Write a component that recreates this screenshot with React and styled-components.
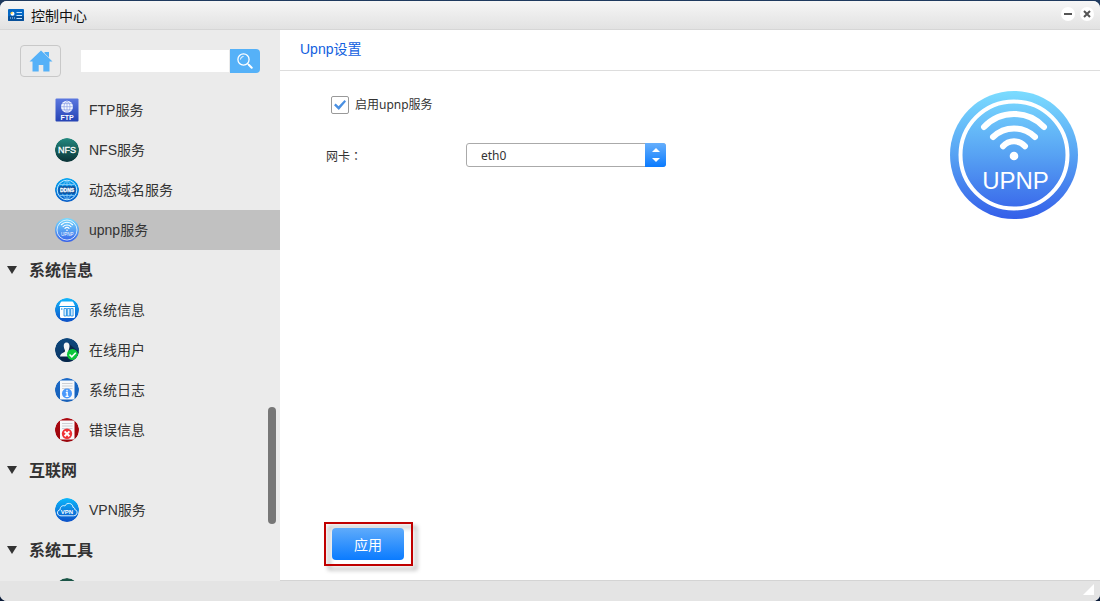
import React, { useState } from "react";
import styled, { createGlobalStyle } from "styled-components";

const Disc = ({ id, from, to, children }) => (
  <svg width="24" height="24" viewBox="0 0 24 24" aria-hidden="true">
    <defs>
      <linearGradient id={id} x1="0" y1="0" x2="0" y2="1">
        <stop offset="0" stopColor={from} />
        <stop offset="1" stopColor={to} />
      </linearGradient>
      <clipPath id={`${id}-clip`}>
        <circle cx="12" cy="12" r="12" />
      </clipPath>
    </defs>
    <g clipPath={`url(#${id}-clip)`}>
      <circle cx="12" cy="12" r="12" fill={`url(#${id})`} />
      {children}
    </g>
  </svg>
);

const FtpIcon = () => (
  <svg width="24" height="24" viewBox="0 0 24 24" aria-hidden="true">
    <defs>
      <linearGradient id="ftp" x1="0" y1="0" x2="0" y2="1">
        <stop offset="0" stopColor="#5c78e0" />
        <stop offset="1" stopColor="#2442b4" />
      </linearGradient>
    </defs>
    <rect x="0.5" y="0.5" width="23" height="23" rx="1" fill="url(#ftp)" />
    <circle cx="12" cy="8.7" r="6" fill="#f4f7ff" />
    <path
      d="M6 8.7h12M7 5.6h10M7 11.8h10M12 2.7v12M12 2.7c-4 3-4 9 0 12M12 2.7c4 3 4 9 0 12"
      fill="none"
      stroke="#8b9fe6"
      strokeWidth="0.7"
    />
    <IconText x="12" y="22" $size={7} $bold>
      FTP
    </IconText>
  </svg>
);

const NfsIcon = () => (
  <Disc id="nfs" from="#23897f" to="#0b3236">
    <IconText x="12" y="15" $size={9} $outline>
      NFS
    </IconText>
  </Disc>
);

const DdnsIcon = () => (
  <Disc id="ddns" from="#08a8f2" to="#0b5ec8">
    <g fill="none" stroke="#8fd2fb" strokeWidth="0.8">
      <circle cx="12" cy="12" r="9.8" stroke="#bde6ff" strokeWidth="1" />
      <path d="M12 2.5v19M5 6.5h14M5 17.5h14M12 2.5c-7 5-7 14 0 19M12 2.5c7 5 7 14 0 19" />
    </g>
    <rect x="3.5" y="8.3" width="17" height="7.4" rx="2" fill="#0b4f9c" />
    <IconText x="12" y="14" $size={5} $bold $outline>
      DDNS
    </IconText>
  </Disc>
);

const UpnpLogo = ({ size, id }) => (
  <svg width={size} height={size} viewBox="0 0 128 128" aria-hidden="true">
    <defs>
      <linearGradient id={id} x1="0" y1="0" x2="0" y2="1">
        <stop offset="0" stopColor="#7bdcff" />
        <stop offset="0.5" stopColor="#57a2f3" />
        <stop offset="1" stopColor="#345fe9" />
      </linearGradient>
    </defs>
    <circle cx="64" cy="64" r="64" fill={`url(#${id})`} />
    <g fill="none" stroke="#fff">
      <circle cx="64" cy="64" r="53.5" strokeWidth="4" />
      <g strokeWidth="6" strokeLinecap="round">
        <path d="M34 36a41 41 0 0 1 60 0" />
        <path d="M43 46a30 30 0 0 1 42 0" />
        <path d="M53 55.3a14.6 14.6 0 0 1 22 0" />
      </g>
    </g>
    <circle cx="64" cy="65" r="4.3" fill="#fff" />
    <IconText x="65.5" y="98" $size={24}>
      UPNP
    </IconText>
  </svg>
);

const SystemIcon = () => (
  <Disc id="system" from="#12b6fb" to="#0d50c6">
    <path d="M7 3.5h10q1 0 1.4 1L20 8H4l1.6-3.5Q6 3.5 7 3.5Z" fill="#fff" />
    <path d="M5 9h15v9.5q0 1.5-1.5 1.5h-12Q5 20 5 18.5Z" fill="#fff" />
    <circle cx="6.8" cy="11" r="0.8" fill="#1481dd" />
    <g fill="#d7edff" stroke="#168ae2" strokeWidth="0.8">
      <path d="M9 10.5h2.5V18H9ZM12.3 10.5h2.5V18h-2.5ZM15.6 10.5h2.5V18h-2.5Z" />
    </g>
  </Disc>
);

const UserIcon = () => (
  <Disc id="user" from="#0d477d" to="#0b3664">
    <path d="M13 5l11 9v10H7L5 19Z" fill="#07264a" />
    <path
      d="M11.5 4.5c2.3 0 3.3 1.7 3 4.2-.2 2-.9 3-1 4.3.3 2 4 1.7 5 5.5H5c.5-4 4.7-3.5 5-5.5 0-1.3-1-2.3-1.2-4.3-.3-2.5.5-4.2 2.7-4.2Z"
      fill="#f1f3f5"
    />
    <circle cx="17.5" cy="16.5" r="5.5" fill="#0cc63a" />
    <path d="M14.5 16.5l2.3 2.3 4-4" fill="none" stroke="#fff" strokeWidth="1.6" />
  </Disc>
);

const Sheet = () => (
  <>
    <rect x="5" y="2.5" width="14.5" height="19" fill="#f8f9fb" />
    <path d="M7 5.5h10.5M7 8h10.5M7 10.5h10.5" stroke="#c8cbd0" strokeWidth="0.9" />
  </>
);

const LogIcon = () => (
  <Disc id="log" from="#1b6ac8" to="#1760b8">
    <Sheet />
    <circle cx="12" cy="15.5" r="5" fill="#4898fb" />
    <path
      d="M12 11.8v1.6M10.8 14.6h1.4v3.6M10.5 18.4h3.2"
      stroke="#fff"
      strokeWidth="1.3"
      fill="none"
    />
  </Disc>
);

const ErrorIcon = () => (
  <Disc id="error" from="#ac0810" to="#99040b">
    <Sheet />
    <circle cx="12" cy="15.8" r="5.2" fill="#ef3338" />
    <path d="M9.6 13.4l4.8 4.8M14.4 13.4l-4.8 4.8" stroke="#fff" strokeWidth="2" />
  </Disc>
);

const VpnIcon = () => (
  <Disc id="vpn" from="#0cb8fb" to="#0c50c8">
    <path
      d="M6 17.8c-4.4 0-4.6-5.5-.8-6.2C5 8 8.500 7 9.800 8c1.800-4 8-3.300 8.200 1.400 1.500 0 1.800 1 1.800 2.200 3.400.7 3 6.200-1.200 6.200Z"
      fill="none"
      stroke="#dff3ff"
      strokeWidth="1"
    />
    <IconText x="12" y="16.2" $size={6} $bold>
      VPN
    </IconText>
  </Disc>
);

const ToolIcon = () => <Disc id="tool" from="#1c5848" to="#0b3236" />;

const PanelIcon = () => (
  <svg width="16" height="12" viewBox="0 0 16 12" aria-hidden="true">
    <rect width="16" height="12" rx="1" fill="#0568c4" />
    <rect y="7" width="16" height="5" rx="1" fill="#07509a" />
    <circle cx="4.5" cy="4.8" r="2" fill="#fff" />
    <path d="M4.5 4.8V2.8a2 2 0 0 0-2 2Z" fill="#ffc92c" />
    <path d="M2 9h1M4 9h1M6 9h1" stroke="#b9dcff" />
    <path d="M8.5 3.5H14M8.5 6.5H14M8.5 9.5H14" stroke="#c5e4ff" />
  </svg>
);

const HomeIcon = () => (
  <svg width="24" height="22" viewBox="0 0 24 22" aria-hidden="true">
    <path
      d="M12 0.5L23.5 11.5H20.5V21.5H14.3V15H9.7V21.5H3.5V11.5H0.5Z"
      fill="#55b1f8"
    />
    <path d="M15.5 2H20V7.5L15.5 3.3Z" fill="#55b1f8" />
  </svg>
);

const SearchIcon = () => (
  <svg width="16" height="16" viewBox="0 0 16 16" fill="none" stroke="#fff" aria-hidden="true">
    <circle cx="6.5" cy="6.5" r="5.6" strokeWidth="1.3" />
    <path d="M3.5 6.5a3 3 0 0 1 3-3" strokeWidth="1" />
    <path d="M10.5 10.5l1.5 1.5" strokeWidth="1.2" />
    <path d="M12 12l2.7 2.7" strokeWidth="2" strokeLinecap="round" />
  </svg>
);

const groups = [
  {
    items: [
      { label: "FTP服务", icon: <FtpIcon /> },
      { label: "NFS服务", icon: <NfsIcon /> },
      { label: "动态域名服务", icon: <DdnsIcon /> },
      { label: "upnp服务", icon: <UpnpLogo size={24} id="upnp-small" /> },
    ],
  },
  {
    title: "系统信息",
    items: [
      { label: "系统信息", icon: <SystemIcon /> },
      { label: "在线用户", icon: <UserIcon /> },
      { label: "系统日志", icon: <LogIcon /> },
      { label: "错误信息", icon: <ErrorIcon /> },
    ],
  },
  {
    title: "互联网",
    items: [{ label: "VPN服务", icon: <VpnIcon /> }],
  },
  {
    title: "系统工具",
    items: [{ icon: <ToolIcon /> }],
  },
];

const Sidebar = () => {
  let [active, setActive] = useState("upnp服务");
  let [search, setSearch] = useState("");

  return (
    <SidebarContainer>
      <SidebarHeader>
        <HomeButton type="button">
          <HomeIcon />
        </HomeButton>
        <SearchForm onSubmit={(e) => e.preventDefault()}>
          <SearchInput
            type="text"
            value={search}
            onChange={(e) => setSearch(e.target.value)}
          />
          <SearchButton type="submit">
            <SearchIcon />
          </SearchButton>
        </SearchForm>
      </SidebarHeader>

      <Nav>
        {groups.map((group, i) => (
          <div key={i}>
            {group.title && (
              <GroupTitle>
                <Arrow width="10" height="8" viewBox="0 0 10 8">
                  <path d="M0 0H10L5 8Z" />
                </Arrow>
                <Caption>{group.title}</Caption>
              </GroupTitle>
            )}
            {group.items.map((item, j) => (
              <NavItem
                key={j}
                href="#"
                $active={item.label === active}
                onClick={() => setActive(item.label)}
              >
                {item.icon}
                <Caption>{item.label}</Caption>
              </NavItem>
            ))}
          </div>
        ))}
      </Nav>
      <ScrollThumb />
    </SidebarContainer>
  );
};

const Settings = () => {
  let [enabled, setEnabled] = useState(true);
  let [card, setCard] = useState("eth0");

  return (
    <Main>
      <MainTitle>Upnp设置</MainTitle>
      <MainBody>
        <Form>
          <CheckRow>
            <Checkbox
              id="enable"
              type="checkbox"
              checked={enabled}
              onChange={(e) => setEnabled(e.target.checked)}
            />
            <Caption as="label" htmlFor="enable">
              启用upnp服务
            </Caption>
          </CheckRow>
          <FieldRow>
            <FieldLabel htmlFor="card">网卡：</FieldLabel>
            <SelectBox>
              <Select
                id="card"
                value={card}
                onChange={(e) => setCard(e.target.value)}
              >
                <option value="eth0">eth0</option>
              </Select>
              <SelectArrows>
                <svg width="8" height="14" viewBox="0 0 8 14" fill="#fff">
                  <path d="M4 0L8 4H0ZM0 10H8L4 14Z" />
                </svg>
              </SelectArrows>
            </SelectBox>
          </FieldRow>
        </Form>
        <UpnpLogo size={128} id="upnp-large" />
      </MainBody>
      <Actions>
        <Highlight>
          <ApplyButton type="button">应用</ApplyButton>
        </Highlight>
      </Actions>
    </Main>
  );
};

const App = () => (
  <>
    <GlobalStyle />
    <Window>
      <TitleBar>
        <PanelIcon />
        <WindowTitle>控制中心</WindowTitle>
        <WindowButton type="button">
          <svg width="8" height="8" viewBox="0 0 8 8" stroke="#555" strokeWidth="2">
            <path d="M0 4H8" />
          </svg>
        </WindowButton>
        <WindowButton type="button">
          <svg width="8" height="8" viewBox="0 0 8 8" stroke="#555" strokeWidth="2">
            <path d="M1 1L7 7M7 1L1 7" />
          </svg>
        </WindowButton>
      </TitleBar>
      <Content>
        <Sidebar />
        <Settings />
      </Content>
      <StatusBar>
        <svg width="11" height="11" viewBox="0 0 11 11">
          <path d="M11 0V11H0Z" fill="#fff" />
        </svg>
      </StatusBar>
    </Window>
  </>
);

export default App;

const GlobalStyle = createGlobalStyle`
  * {
    box-sizing: border-box;
  }

  body {
    margin: 0;
    padding-top: 1px;
    background: linear-gradient(#1f3a5f, #0b1b38);
    color: #333;
    font-family: "Liberation Sans", "Noto Sans CJK SC", sans-serif;
    font-size: 14px;
  }

  button,
  input,
  select {
    font: inherit;
  }

  svg {
    display: block;
    flex: none;
  }
`;

const IconText = styled.text`
  fill: #fff;
  stroke: ${({ $outline }) => ($outline ? "#fff" : "none")};
  stroke-width: 0.3;
  font-family: "Liberation Sans", sans-serif;
  font-size: ${({ $size }) => $size}px;
  font-weight: ${({ $bold }) => ($bold ? 700 : 400)};
  text-anchor: middle;
`;

const Window = styled.div`
  height: calc(100vh - 1px);
  display: flex;
  flex-direction: column;
  overflow: hidden;
  border-radius: 7px;
  background: #fff;
`;

const TitleBar = styled.header`
  height: 29px;
  flex: none;
  display: flex;
  align-items: center;
  gap: 5px;
  padding: 0 6px 0 8px;
  border-bottom: 1px solid #d6d6d6;
  background: linear-gradient(#f6f6f6, #e2e2e2);
`;

const WindowTitle = styled.h1`
  flex: 1;
  margin: 0;
  padding-left: 2px;
  color: #111;
  font-size: 14px;
  font-weight: 400;
`;

const WindowButton = styled.button`
  width: 14px;
  height: 14px;
  margin-bottom: 2px;
  padding: 0;
  display: flex;
  align-items: center;
  justify-content: center;
  border: none;
  border-radius: 50%;
  background: #fff;
`;

const Content = styled.div`
  flex: 1;
  min-height: 0;
  display: flex;
`;

const StatusBar = styled.footer`
  height: 20px;
  flex: none;
  display: flex;
  justify-content: flex-end;
  align-items: center;
  padding: 0 6px 4px 0;
  background: #e4e4e4;
`;

const SidebarContainer = styled.aside`
  position: relative;
  width: 280px;
  flex: none;
  display: flex;
  flex-direction: column;
  background: #ebebeb;
`;

const SidebarHeader = styled.div`
  height: 60px;
  flex: none;
  display: flex;
  align-items: center;
  gap: 20px;
  padding: 2px 20px 0;
`;

const HomeButton = styled.button`
  width: 41px;
  height: 32px;
  flex: none;
  padding: 0;
  display: flex;
  align-items: center;
  justify-content: center;
  border: 1px solid #c8c8c8;
  border-radius: 4px;
  background: transparent;
`;

const SearchForm = styled.form`
  flex: 1;
  min-width: 0;
  display: flex;
  align-items: center;
  gap: 1px;
`;

const SearchInput = styled.input`
  flex: 1;
  min-width: 0;
  height: 22px;
  padding: 0 6px;
  border: none;
  background: #fff;
`;

const SearchButton = styled.button`
  width: 30px;
  height: 24px;
  flex: none;
  padding: 0;
  display: flex;
  align-items: center;
  justify-content: center;
  border: none;
  border-radius: 0 4px 4px 0;
  background: #55b1f8;
`;

const Nav = styled.nav`
  flex: 1;
  min-height: 0;
  overflow: hidden;
`;

const Caption = styled.span`
  padding-bottom: 2px;
`;

const GroupTitle = styled.h2`
  height: 40px;
  margin: 0;
  padding-left: 7px;
  display: flex;
  align-items: center;
  gap: 12px;
  font-size: 16px;
  font-weight: 700;
`;

const Arrow = styled.svg`
  fill: #333;
`;

const NavItem = styled.a`
  height: 40px;
  padding-left: 55px;
  display: flex;
  align-items: center;
  gap: 10px;
  background: ${({ $active }) => ($active ? "#c1c1c1" : "transparent")};
  color: #333;
  text-decoration: none;
`;

const ScrollThumb = styled.div`
  position: absolute;
  right: 4px;
  bottom: 57px;
  width: 8px;
  height: 117px;
  border-radius: 4px;
  background: #777;
`;

const Main = styled.main`
  flex: 1;
  min-width: 0;
  display: flex;
  flex-direction: column;
  border-bottom: 1px solid #d4d4d4;
`;

const MainTitle = styled.h2`
  height: 41px;
  flex: none;
  margin: 0;
  padding: 0 20px 4px;
  display: flex;
  align-items: center;
  border-bottom: 1px solid #ddd;
  color: #1160e0;
  font-size: 14px;
  font-weight: 400;
`;

const MainBody = styled.div`
  flex: 1;
  min-height: 0;
  display: flex;
  justify-content: space-between;
  align-items: flex-start;
  padding: 20px 22px 0 46px;
`;

const Form = styled.form`
  font-family: "Noto Sans", "Noto Sans CJK SC", sans-serif;
  font-size: 12px;
`;

const CheckRow = styled.div`
  display: flex;
  align-items: center;
  gap: 6px;
  height: 28px;
  padding-left: 5px;
`;

const Checkbox = styled.input`
  appearance: none;
  width: 18px;
  height: 18px;
  margin: 0;
  display: flex;
  align-items: center;
  justify-content: center;
  border: 1px solid #999;
  border-radius: 2px;
  background: #fff;

  &:checked::before {
    content: "";
    width: 12px;
    height: 10px;
    background: #4a90e2;
    clip-path: polygon(0 52%, 14% 36%, 38% 62%, 88% 0, 100% 14%, 40% 100%);
  }
`;

const FieldRow = styled.div`
  display: flex;
  align-items: center;
  margin-top: 24px;
`;

/* the TC face centres the full-width colon */
const FieldLabel = styled.label`
  width: 140px;
  font-family: "Noto Sans CJK TC", sans-serif;
`;

const SelectBox = styled.div`
  display: grid;
  width: 200px;
  height: 24px;
`;

const Select = styled.select`
  grid-area: 1 / 1;
  appearance: none;
  padding: 0 30px 0 14px;
  border: 1px solid #aaa;
  border-radius: 3px;
  background: #fff;
  color: #333;
`;

const SelectArrows = styled.span`
  grid-area: 1 / 1;
  z-index: 1;
  justify-self: end;
  width: 21px;
  display: flex;
  align-items: center;
  justify-content: center;
  border-radius: 0 3px 3px 0;
  background: linear-gradient(#66affc, #0a7bff);
  pointer-events: none;
`;

const Actions = styled.div`
  flex: none;
  display: flex;
  padding: 0 44px 14px;
`;

/* red marker frame drawn around the apply button */
const Highlight = styled.div`
  position: relative;
  padding: 6px 9px 6px 8px;

  &::before {
    content: "";
    position: absolute;
    inset: 0;
    border: 2px solid #c00000;
    filter: drop-shadow(4px 4px 2px rgba(0, 0, 0, 0.35));
    pointer-events: none;
  }
`;

const ApplyButton = styled.button`
  position: relative;
  display: block;
  width: 72px;
  height: 32px;
  padding: 0;
  border: none;
  border-radius: 4px;
  background: linear-gradient(#5fabfb, #0a7bff);
  color: #fff;
`;
